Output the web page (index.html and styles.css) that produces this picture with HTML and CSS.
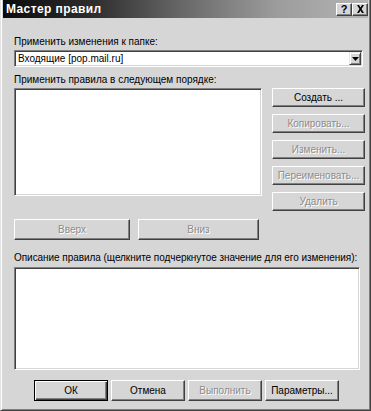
FILE: index.html
```html
<!DOCTYPE html>
<html lang="ru">
<head>
<meta charset="utf-8">
<title>Мастер правил</title>
<link rel="stylesheet" href="styles.css">
</head>
<body>
<div class="window">
  <div class="titlebar">
    <span class="title">Мастер правил</span>
    <div class="caption-buttons">
      <span class="cap-btn help">?</span>
      <span class="cap-btn close">
        <svg width="9" height="8" viewBox="0 0 9 8"><path d="M1 0h2l1.5 2.5L6 0h2L5.5 4L8 8H6L4.5 5.5L3 8H1l2.5-4z" fill="#000"/></svg>
      </span>
    </div>
  </div>
  <div class="content">
    <div class="label first">Применить изменения к папке:</div>
    <div class="combo">
      <span class="combo-text">Входящие [pop.mail.ru]</span>
      <span class="combo-btn"><svg width="7" height="4" viewBox="0 0 7 4"><path d="M0 0h7L3.5 4z" fill="#000"/></svg></span>
    </div>
    <div class="label second">Применить правила в следующем порядке:</div>
    <div class="rules-row">
      <div class="listbox"></div>
      <div class="side-buttons">
        <div class="btn">Создать ...</div>
        <div class="btn disabled">Копировать...</div>
        <div class="btn disabled">Изменить...</div>
        <div class="btn disabled">Переименовать...</div>
        <div class="btn disabled">Удалить</div>
      </div>
    </div>
    <div class="move-row">
      <div class="btn disabled up">Вверх</div>
      <div class="btn disabled down">Вниз</div>
    </div>
    <div class="label third">Описание правила (щелкните подчеркнутое значение для его изменения):</div>
    <div class="desc"></div>
    <div class="footer">
      <div class="btn default">ОК</div>
      <div class="btn">Отмена</div>
      <div class="btn disabled">Выполнить</div>
      <div class="btn">Параметры...</div>
    </div>
  </div>
</div>
</body>
</html>
```
FILE: styles.css
```css
html, body {
  margin: 0;
  padding: 0;
  background: #d6d6d6;
}
body {
  font-family: "Liberation Sans", Arial, sans-serif;
  font-size: 10px;
  color: #000;
}
.window {
  width: 371px;
  height: 411px;
  box-sizing: border-box;
  background: #d6d6d6;
  border-left: 1px solid #e2e2e2;
  border-right: 1px solid #404040;
  border-bottom: 1px solid #404040;
  box-shadow: inset 1px 0 #fff, inset -1px -1px #808080;
  padding: 0 2px 2px 2px;
  display: flex;
  flex-direction: column;
}
.titlebar {
  height: 18px;
  flex: none;
  background: linear-gradient(90deg, #0c0c0c 0%, #2e2e2e 25%, #6a6a6a 50%, #9c9c9c 75%, #b4b4b4 100%);
  display: flex;
  align-items: center;
  justify-content: space-between;
  padding: 0 0 0 3px;
}
.title {
  color: #fff;
  font-weight: bold;
  font-size: 12px;
  letter-spacing: 0.4px;
}
.caption-buttons {
  display: flex;
}
.cap-btn {
  width: 16px;
  height: 13px;
  box-sizing: border-box;
  background: #d6d6d6;
  border-top: 1px solid #fff;
  border-left: 1px solid #fff;
  border-right: 1px solid #404040;
  border-bottom: 1px solid #404040;
  box-shadow: inset -1px -1px #808080;
  display: flex;
  align-items: center;
  justify-content: center;
  font-weight: bold;
  font-size: 11px;
  line-height: 11px;
}
.content {
  padding: 0 0 0 11px;
  display: flex;
  flex-direction: column;
}
.label {
  line-height: 13px;
  white-space: nowrap;
}
.label.first { margin-top: 17px; }
.label.second { margin-top: 6px; }
.label.third { margin-top: 11px; letter-spacing: -0.05px; }
.combo {
  margin-top: 2px;
  width: 349px;
  height: 17px;
  box-sizing: border-box;
  background: #fff;
  border-top: 1px solid #808080;
  border-left: 1px solid #808080;
  border-right: 1px solid #fff;
  border-bottom: 1px solid #fff;
  box-shadow: inset 1px 1px #404040, inset -1px -1px #d6d6d6;
  display: flex;
  align-items: center;
  justify-content: space-between;
  padding: 0 1px 0 3px;
}
.combo-text {
  line-height: 13px;
}
.combo-btn {
  width: 12px;
  height: 13px;
  box-sizing: border-box;
  background: #d6d6d6;
  border-top: 1px solid #e8e8e8;
  border-left: 1px solid #e8e8e8;
  border-right: 1px solid #404040;
  border-bottom: 1px solid #404040;
  box-shadow: inset 1px 1px #fff, inset -1px -1px #808080;
  display: flex;
  align-items: center;
  justify-content: center;
}
.rules-row {
  margin-top: 2px;
  display: flex;
  align-items: flex-start;
  gap: 10px;
}
.listbox, .desc {
  box-sizing: border-box;
  background: #fff;
  border-top: 1px solid #808080;
  border-left: 1px solid #808080;
  border-right: 1px solid #fff;
  border-bottom: 1px solid #fff;
  box-shadow: inset 1px 1px #404040, inset -1px -1px #d6d6d6;
}
.listbox {
  width: 248px;
  height: 108px;
}
.side-buttons {
  width: 93px;
  display: flex;
  flex-direction: column;
  gap: 7px;
}
.btn {
  height: 19px;
  box-sizing: border-box;
  background: #d6d6d6;
  border-top: 1px solid #fff;
  border-left: 1px solid #fff;
  border-right: 1px solid #404040;
  border-bottom: 1px solid #404040;
  box-shadow: inset -1px -1px #808080;
  display: flex;
  align-items: center;
  justify-content: center;
  white-space: nowrap;
  line-height: 13px;
}
.btn.disabled {
  color: #8c8c8c;
  text-shadow: 1px 1px #fff;
}
.move-row {
  margin-top: 8px;
  display: flex;
  gap: 8px;
}
.move-row .btn {
  height: 21px;
}
.move-row .up { width: 116px; }
.move-row .down { width: 121px; }
.desc {
  margin-top: 3px;
  width: 346px;
  height: 103px;
}
.footer {
  margin-top: 10px;
  padding-left: 20px;
  display: flex;
  gap: 3px;
}
.footer .btn {
  width: 74px;
  height: 21px;
}
.footer .btn.default {
  border: 1px solid #000;
  box-shadow: inset 1px 1px #fff, inset -1px -1px #404040, inset -2px -2px #808080;
}
```
